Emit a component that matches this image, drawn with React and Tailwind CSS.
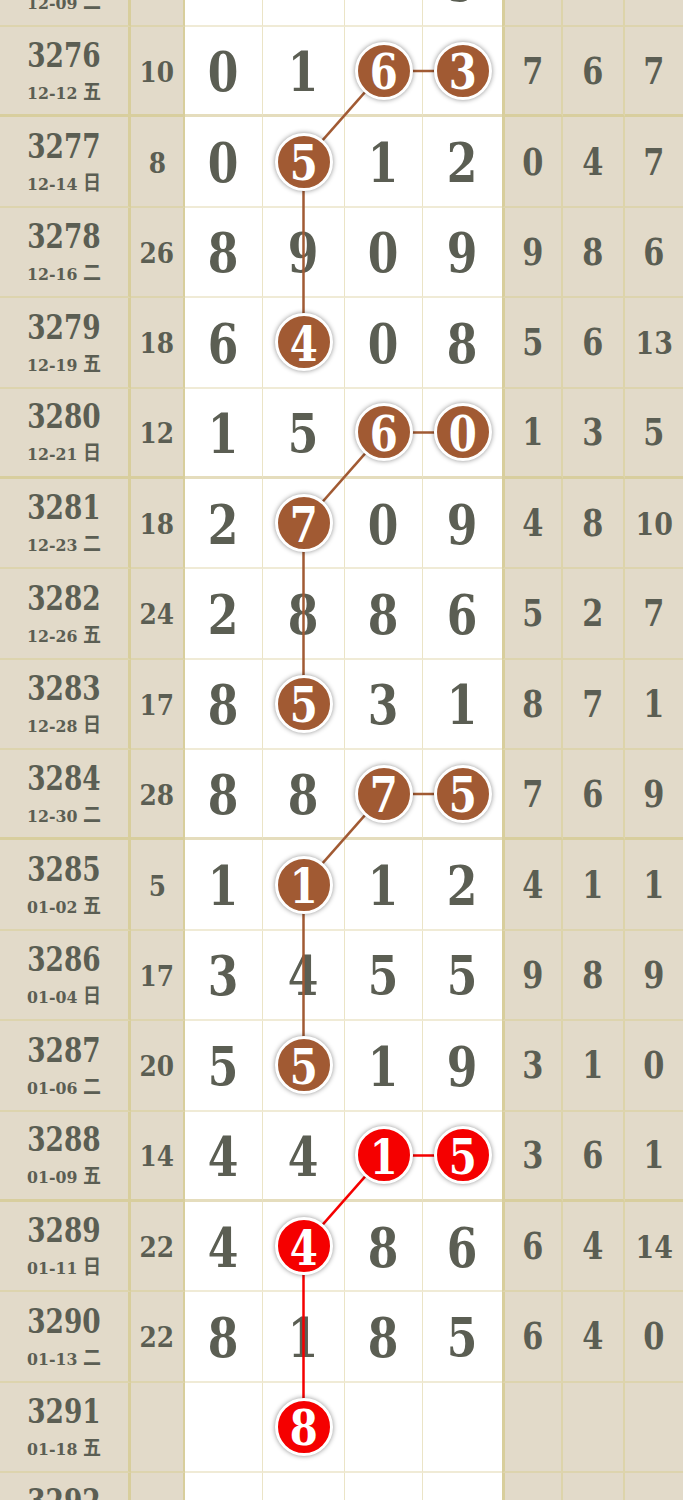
import React from 'react';

const ROW_H = 90.375;

const data = [
  ['3275', '12-09', '二', '', ['', '', '', '9'], ['', '', ''], {}],
  ['3276', '12-12', '五', '10', ['0', '1', '6', '3'], ['7', '6', '7'], { 2: 'b', 3: 'b' }],
  ['3277', '12-14', '日', '8', ['0', '5', '1', '2'], ['0', '4', '7'], { 1: 'b' }],
  ['3278', '12-16', '二', '26', ['8', '9', '0', '9'], ['9', '8', '6'], {}],
  ['3279', '12-19', '五', '18', ['6', '4', '0', '8'], ['5', '6', '13'], { 1: 'b' }],
  ['3280', '12-21', '日', '12', ['1', '5', '6', '0'], ['1', '3', '5'], { 2: 'b', 3: 'b' }],
  ['3281', '12-23', '二', '18', ['2', '7', '0', '9'], ['4', '8', '10'], { 1: 'b' }],
  ['3282', '12-26', '五', '24', ['2', '8', '8', '6'], ['5', '2', '7'], {}],
  ['3283', '12-28', '日', '17', ['8', '5', '3', '1'], ['8', '7', '1'], { 1: 'b' }],
  ['3284', '12-30', '二', '28', ['8', '8', '7', '5'], ['7', '6', '9'], { 2: 'b', 3: 'b' }],
  ['3285', '01-02', '五', '5', ['1', '1', '1', '2'], ['4', '1', '1'], { 1: 'b' }],
  ['3286', '01-04', '日', '17', ['3', '4', '5', '5'], ['9', '8', '9'], {}],
  ['3287', '01-06', '二', '20', ['5', '5', '1', '9'], ['3', '1', '0'], { 1: 'b' }],
  ['3288', '01-09', '五', '14', ['4', '4', '1', '5'], ['3', '6', '1'], { 2: 'r', 3: 'r' }],
  ['3289', '01-11', '日', '22', ['4', '4', '8', '6'], ['6', '4', '14'], { 1: 'r' }],
  ['3290', '01-13', '二', '22', ['8', '1', '8', '5'], ['6', '4', '0'], {}],
  ['3291', '01-18', '五', '', ['', '8', '', ''], ['', '', ''], { 1: 'r' }],
  ['3292', '01-20', '日', '', ['', '', '', ''], ['', '', ''], {}],
];

const BROWN = '#a15a33';
const RED = '#f50000';

const isThick = (no) => Number(no) % 4 === 0;
const colX = [223.5, 303.5, 383.5, 462.5];
const rowCY = (k) => k * ROW_H + (ROW_H - (isThick(data[k][0]) ? 3 : 2)) / 2;

const segments = [];
data.forEach((r, k) => {
  const balls = r[6];
  if (balls[2] && balls[3]) {
    const c = balls[2] === 'r' ? RED : BROWN;
    segments.push([colX[2], rowCY(k), colX[3], rowCY(k), c]);
    segments.push([colX[2], rowCY(k), colX[1], rowCY(k + 1), c]);
    segments.push([colX[1], rowCY(k + 1), colX[1], rowCY(k + 3), c]);
  }
});

function Ball({ v, color }) {
  return (
    <div
      className={`relative z-10 flex h-[58px] w-[58px] shrink-0 items-center justify-center rounded-full border-[3px] border-white shadow-[0_0_5px_rgba(0,0,0,0.45)] ${
        color === 'r' ? 'bg-[#f50000]' : 'bg-[#a15a33]'
      }`}
    >
      <span className="inline-block scale-x-[0.84] pt-[3px] text-[48px] leading-none font-bold text-white">{v}</span>
    </div>
  );
}

function DigitCell({ v, ball, width, last, thick }) {
  const bw = thick ? 'border-b-[3px] border-b-[#e5ddbd]' : 'border-b-2 border-b-[#f0ebd6]';
  const br = last ? '' : 'border-r border-r-[#ebe4c6]';
  return (
    <div className={`${width} flex shrink-0 items-center justify-center bg-white ${br} ${bw}`}>
      {ball ? (
        <Ball v={v} color={ball} />
      ) : (
        <span className="inline-block scale-x-[0.8] pt-[2px] text-[55px] leading-none font-bold text-[#5b5e53]">{v}</span>
      )}
    </div>
  );
}

function RightCell({ v, width, first, last, thick }) {
  const bb = thick ? 'border-b-[3px] border-b-[#d8ce9e]' : 'border-b-2 border-b-[#ddd4ae]';
  const bl = first ? 'border-l-[3px] border-l-[#d8ce9c]' : '';
  const br = last ? '' : 'border-r-2 border-r-[#ddd4aa]';
  return (
    <div className={`${width} flex shrink-0 items-center justify-center bg-[#e2dac9] ${bl} ${br} ${bb}`}>
      <span
        className={`inline-block pt-[1px] leading-none font-bold text-[#5b5e53] ${
          v.length > 1 ? 'scale-x-[0.84] text-[32px]' : 'scale-x-[0.82] text-[37px]'
        }`}
      >
        {v}
      </span>
    </div>
  );
}

function Row({ r }) {
  const [no, date, wd, sum, d, rt, balls] = r;
  const thick = isThick(no);
  const bb = thick ? 'border-b-[3px] border-b-[#d8ce9e]' : 'border-b-2 border-b-[#ddd4ae]';
  return (
    <div className="flex h-[90.375px]">
      <div className={`flex w-[131px] shrink-0 flex-col items-center justify-center bg-[#e2dac9] border-r-[3px] border-r-[#d8ce9c] ${bb}`}>
        <span className="inline-block scale-x-[0.8] text-[33px] leading-none font-bold text-[#5b5e53]">{no}</span>
        <span className="mt-[10px] inline-block scale-x-[0.9] text-[17.5px] leading-none font-bold whitespace-nowrap text-[#5b5e53]">
          {date}
          <span className="ml-[6px] text-[20px]">{wd}</span>
        </span>
      </div>
      <div className={`flex w-[54px] shrink-0 items-center justify-center bg-[#e2dac9] border-r-2 border-r-[#d8ce9c] ${bb}`}>
        <span className="inline-block scale-x-[0.92] pt-[3px] text-[27px] leading-none font-bold text-[#5b5e53]">{sum}</span>
      </div>
      <DigitCell v={d[0]} ball={balls[0]} width="w-[78px]" thick={thick} />
      <DigitCell v={d[1]} ball={balls[1]} width="w-[82px]" thick={thick} />
      <DigitCell v={d[2]} ball={balls[2]} width="w-[78px]" thick={thick} />
      <DigitCell v={d[3]} ball={balls[3]} width="w-[79px]" thick={thick} last />
      <RightCell v={rt[0]} width="w-[61px]" thick={thick} first />
      <RightCell v={rt[1]} width="w-[62px]" thick={thick} />
      <RightCell v={rt[2]} width="w-[58px]" thick={thick} last />
    </div>
  );
}

export default function App() {
  return (
    <div className="h-[1500px] w-[683px] overflow-hidden bg-white font-[family-name:DejaVu_Serif,Noto_Sans_CJK_SC,serif]">
      <div className="relative -mt-[63.375px]">
        {data.map((r) => (
          <Row key={r[0]} r={r} />
        ))}
        <svg
          className="pointer-events-none absolute left-0 top-0"
          width="683"
          height={Math.ceil(ROW_H * data.length)}
        >
          {segments.map(([x1, y1, x2, y2, c], i) => (
            <line key={i} x1={x1} y1={y1} x2={x2} y2={y2} stroke={c} strokeWidth="2.5" />
          ))}
        </svg>
      </div>
    </div>
  );
}
